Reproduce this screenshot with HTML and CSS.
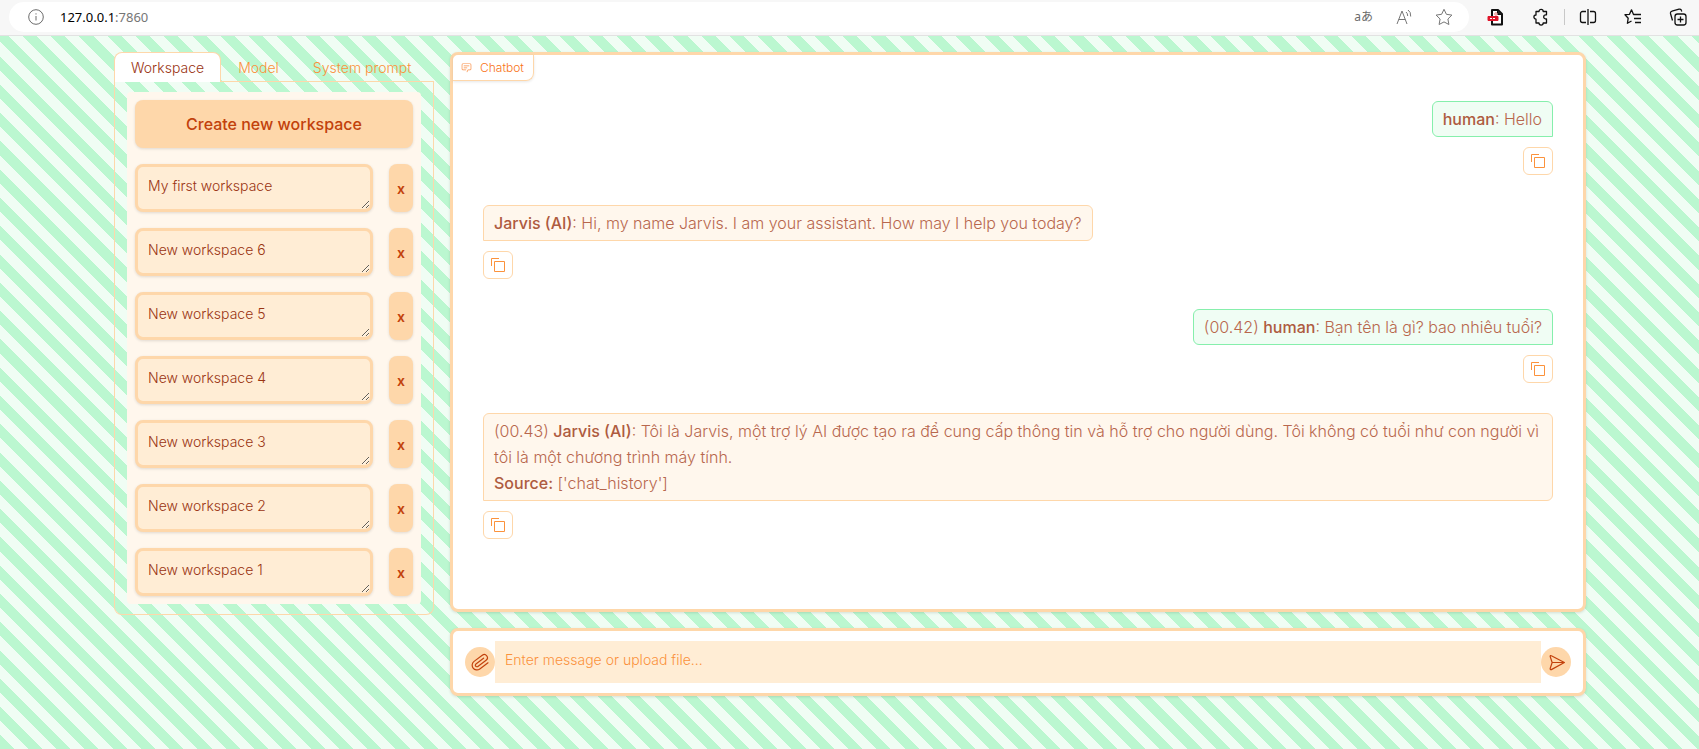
FILE: index.html
```
<!DOCTYPE html>
<html lang="vi">
<head>
<meta charset="utf-8">
<title>Jarvis</title>
<link rel="stylesheet" href="styles.css">
</head>
<body>
<svg class="sprite">
  <symbol id="copy" viewBox="0 0 32 32"><path fill="currentColor" d="M28 10v18H10V10h18m0-2H10a2 2 0 0 0-2 2v18a2 2 0 0 0 2 2h18a2 2 0 0 0 2-2V10a2 2 0 0 0-2-2Z"/><path fill="currentColor" d="M4 18H2V4a2 2 0 0 1 2-2h14v2H4Z"/></symbol>
</svg>
<header class="browser">
  <div class="address">
    <svg class="info" viewBox="0 0 16 16"><circle cx="8" cy="8" r="7.3"/><path d="M8 7v4.5M8 4.3v1.2"/></svg>
    <p class="url">127.0.0.1<span>:7860</span></p>
    <button class="tool translate" aria-label="Translate">aあ</button>
    <button class="tool grey" aria-label="Read aloud"><svg viewBox="0 0 18 18"><path d="M2 16 7 3l5 13M3.700 11.500h6.600M11 4q1.700 1.200 1.700 4M13 2q3 1.700 2.700 6.500"/></svg></button>
    <button class="tool grey" aria-label="Favourite"><svg viewBox="0 0 18 18"><path d="m9 1.300 2.400 5 5.500.8-4 3.900 1 5.500L9 13.900l-4.900 2.600 1-5.500-4-3.900 5.500-.8Z"/></svg></button>
  </div>
  <div class="extensions">
    <button class="tool" aria-label="PDF"><svg viewBox="0 0 18 18"><path d="M5 2h6l4 4v10.500H5Z" stroke-width="2" fill="#fff"/><path d="M10.500 1.500v5H15.500Z" fill="#222"/><circle cx="9" cy="6" r="1.300" stroke="#e88"/><path d="M1 8.500h10v4H1Z" fill="#e0162b" stroke="#e0162b"/><path d="M3 10.500h6" stroke="#fff" stroke-dasharray="2 1"/></svg></button>
    <button class="tool" aria-label="Extensions"><svg viewBox="0 0 18 18"><path stroke-width="1.300" d="M4 3.500h3a2.100 2.100 0 0 1 4.200 0h3.300v3.300h-.7a2.100 2.100 0 0 0 0 4.200h.7v4h-3.300a2.100 2.100 0 0 1-4.200 0H4v-3.800a2.100 2.100 0 0 1 0-4.200Z"/></svg></button>
    <span class="divider"></span>
    <button class="tool" aria-label="Split screen"><svg viewBox="0 0 18 18"><path stroke-width="1.300" d="M7 3.500H3.500a2 2 0 0 0-2 2v7a2 2 0 0 0 2 2H7M11 3.500h3.500a2 2 0 0 1 2 2v7a2 2 0 0 1-2 2H11M9 1v16"/></svg></button>
    <button class="tool" aria-label="Favourites"><svg viewBox="0 0 18 18"><path stroke-width="1.300" d="M12 6.500H9.500L7.500 1.800 5.500 6.300 1 6.700l3.200 3.500-.8 5.100 4.100-2.300M11 6.500h6M10 10.500h7M11 14.500h6"/></svg></button>
    <button class="tool" aria-label="Collections"><svg viewBox="0 0 18 18"><g stroke-width="1.300"><rect x="6" y="6" width="11" height="11" rx="2.500"/><path d="M11.500 8.500v6M8.500 11.500h6M3.500 12.500 1.500 5.500a2 2 0 0 1 1.500-2.400l7-1.900a2 2 0 0 1 2.500 1.500l.3.800"/></g></svg></button>
  </div>
</header>
<main class="app">
  <section class="side">
    <div class="tabs" role="tablist">
      <button class="tab active" role="tab" aria-selected="true">Workspace</button>
      <button class="tab" role="tab">Model</button>
      <button class="tab" role="tab">System prompt</button>
    </div>
    <div class="panel">
      <div class="workspaces">
        <button class="create">Create new workspace</button>
        <div class="row"><textarea class="name" rows="1" aria-label="Workspace name">My first workspace</textarea><button class="remove">x</button></div>
        <div class="row"><textarea class="name" rows="1" aria-label="Workspace name">New workspace 6</textarea><button class="remove">x</button></div>
        <div class="row"><textarea class="name" rows="1" aria-label="Workspace name">New workspace 5</textarea><button class="remove">x</button></div>
        <div class="row"><textarea class="name" rows="1" aria-label="Workspace name">New workspace 4</textarea><button class="remove">x</button></div>
        <div class="row"><textarea class="name" rows="1" aria-label="Workspace name">New workspace 3</textarea><button class="remove">x</button></div>
        <div class="row"><textarea class="name" rows="1" aria-label="Workspace name">New workspace 2</textarea><button class="remove">x</button></div>
        <div class="row"><textarea class="name" rows="1" aria-label="Workspace name">New workspace 1</textarea><button class="remove">x</button></div>
      </div>
    </div>
  </section>
  <section class="chat">
    <div class="card log">
      <h2 class="label"><svg viewBox="0 0 32 32"><path fill="currentColor" d="M17.740 30 16 29l4-7h6a2 2 0 0 0 2-2V8a2 2 0 0 0-2-2H6a2 2 0 0 0-2 2v12a2 2 0 0 0 2 2h9v2H6a4 4 0 0 1-4-4V8a4 4 0 0 1 4-4h20a4 4 0 0 1 4 4v12a4 4 0 0 1-4 4h-4.840Z"/><path fill="currentColor" d="M8 10h16v2H8zm0 6h10v2H8z"/></svg>Chatbot</h2>
      <div class="messages">
        <article class="message user">
          <p class="bubble"><strong>human</strong>: Hello</p>
          <button class="copy" aria-label="Copy"><svg><use href="#copy"/></svg></button>
        </article>
        <article class="message">
          <p class="bubble"><strong>Jarvis (AI)</strong>: Hi, my name Jarvis. I am your assistant. How may I help you today?</p>
          <button class="copy" aria-label="Copy"><svg><use href="#copy"/></svg></button>
        </article>
        <article class="message user">
          <p class="bubble">(00.42) <strong>human</strong>: Bạn tên là gì? bao nhiêu tuổi?</p>
          <button class="copy" aria-label="Copy"><svg><use href="#copy"/></svg></button>
        </article>
        <article class="message">
          <p class="bubble">(00.43) <strong>Jarvis (AI)</strong>: Tôi là Jarvis, một trợ lý AI được tạo ra để cung cấp thông tin và hỗ trợ cho người dùng. Tôi không có tuổi như con người vì tôi là một chương trình máy tính.<br><strong>Source:</strong> ['chat_history']</p>
          <button class="copy" aria-label="Copy"><svg><use href="#copy"/></svg></button>
        </article>
      </div>
    </div>
    <form class="card composer">
      <button class="round" type="button" aria-label="Upload file"><svg viewBox="0 0 24 24"><path d="m21.440 11.050-9.190 9.190a6 6 0 0 1-8.490-8.490l9.190-9.190a4 4 0 0 1 5.660 5.660l-9.200 9.190a2 2 0 0 1-2.830-2.830l8.490-8.480" transform="rotate(8 12 12)"/></svg></button>
      <input class="entry" type="text" aria-label="Message" placeholder="Enter message or upload file...">
      <button class="round" type="button" aria-label="Send"><svg viewBox="0 0 24 24"><path d="M5.500 3.500Q4 2.500 4 4.500L6.500 12 4 19.500q0 2 1.500 1.500L22 12ZM6.500 12H21"/></svg></button>
    </form>
  </section>
</main>
</body>
</html>
```
FILE: styles.css
```
* { box-sizing: border-box; }
body {
  margin: 0;
  min-height: 100vh;
  display: flex;
  flex-direction: column;
  font-family: Inter, "Noto Sans", sans-serif;
  font-size: 16px;
  font-weight: 300;
  color: #9a3412;
  background: repeating-linear-gradient(45deg, #bbf7d0, #bbf7d0 10px, #f0fdf4 10px, #f0fdf4 20px);
}
button, input, textarea { font: inherit; margin: 0; }
button { border: 0; padding: 0; background: none; cursor: pointer; }
p, h2 { margin: 0; }
.sprite { display: none; }

.browser {
  display: flex;
  align-items: flex-start;
  height: 36px;
  padding: 2px 12px 0 9px;
  background: #f7f7f7;
  border-bottom: 1px solid #e2e2e2;
}
.address {
  flex: 1;
  display: flex;
  align-items: center;
  height: 30px;
  padding: 0 16px 0 19px;
  border-radius: 15px;
  background: #fff;
}
.info { width: 16px; height: 16px; margin-right: 16px; fill: none; stroke: #6b6b6b; }
.url { flex: 1; font: 13px "Noto Sans", sans-serif; color: #000; }
.url span { color: #767676; }
.tool { display: flex; width: 18px; height: 18px; color: #111; }
.tool svg { width: 18px; height: 18px; fill: none; stroke: currentColor; stroke-linejoin: round; }
.address .tool + .tool { margin-left: 22px; }
.grey { color: #767676; }
.translate { width: auto; font: 12px/18px "Noto Sans", "Noto Sans CJK JP", sans-serif; color: #6b6b6b; }
.extensions { display: flex; align-items: center; height: 30px; padding-left: 18px; gap: 27px; }
.divider { width: 1px; height: 16px; margin: 0 -13px; background: #c8c8c8; }

.app {
  flex: 1;
  display: flex;
  align-items: flex-start;
  gap: 16px;
  padding: 16px 113px 16px 114px;
}
.side { width: 320px; }
.tabs { display: flex; border-bottom: 1px solid #fed7aa; }
.tab {
  height: 30px;
  padding: 0 16px;
  margin-bottom: -1px;
  border: 1px solid transparent;
  border-bottom: 0;
  border-radius: 8px 8px 0 0;
  font-size: 14px;
  color: #fb923c;
}
.tab.active { background: #fff; border-color: #fed7aa; color: #9a3412; }
.panel {
  padding: 10px 12px;
  border: 1px solid #fed7aa;
  border-top: 0;
  border-radius: 0 0 8px 8px;
}
.workspaces {
  display: flex;
  flex-direction: column;
  gap: 16px;
  padding: 8px;
  border-radius: 4px;
  background: #fff7ed;
}
.create, .remove, .name {
  height: 48px;
  border-radius: 8px;
  box-shadow: 0 1px 3px rgba(0, 0, 0, .12);
}
.create, .remove { background: #fed7aa; color: #c2410c; font-weight: 500; }
.row { display: flex; gap: 16px; }
.name {
  flex: 1;
  min-width: 0;
  padding: 8px 10px;
  border: 3px solid #fed7aa;
  background: #ffedd5;
  color: #9a3412;
  font-size: 14px;
  line-height: 21px;
  resize: vertical;
  overflow: hidden;
}
.remove { width: 24px; font-size: 14px; font-weight: 600; }

.chat { flex: 1; min-width: 0; display: flex; flex-direction: column; gap: 16px; }
.card {
  border: 3px solid #fed7aa;
  border-radius: 8px;
  background: #fff;
  box-shadow: 0 1px 3px rgba(0, 0, 0, .12);
}
.label {
  display: inline-flex;
  align-items: center;
  gap: 8px;
  height: 26px;
  padding: 0 9px 0 8px;
  border: 1px solid #fed7aa;
  border-width: 0 1px 1px 0;
  border-radius: 0 0 8px 0;
  box-shadow: 0 1px 3px rgba(0, 0, 0, .1);
  font-size: 12px;
  font-weight: 300;
  color: #f97316;
}
.label svg { width: 11px; height: 11px; opacity: .8; }
.log { min-height: 560px; display: flex; flex-direction: column; align-items: flex-start; }
.messages { align-self: stretch; display: flex; flex-direction: column; gap: 30px; padding: 20px 30px; }
.message { display: flex; flex-direction: column; align-items: flex-start; gap: 10px; }
.bubble {
  padding: 4px 10px;
  border: 1px solid #fed7aa;
  border-radius: 6px 6px 6px 0;
  background: #fff7ed;
  line-height: 26px;
  color: #b8674d;
}
.bubble strong { font-weight: 500; color: #ae5b40; }
.user { align-items: flex-end; }
.user .bubble { border-color: #86efac; border-radius: 6px 6px 0 6px; background: #f0fdf4; }
.copy {
  display: flex;
  align-items: center;
  justify-content: center;
  width: 30px;
  height: 28px;
  border: 1px solid #fed7aa;
  border-radius: 6px;
  color: #fb923c;
}
.copy svg { width: 16px; height: 16px; }

.composer { display: flex; align-items: center; padding: 10px 12px; }
.round {
  display: flex;
  align-items: center;
  justify-content: center;
  width: 30px;
  height: 30px;
  border-radius: 50%;
  background: #fed7aa;
  color: #c2410c;
}
.round svg { width: 19px; height: 19px; fill: none; stroke: currentColor; stroke-width: 1.500; stroke-linejoin: round; stroke-linecap: round; }
.entry {
  flex: 1;
  min-width: 0;
  height: 42px;
  padding: 0 10px 5px;
  border: 0;
  background: #ffedd5;
  color: #9a3412;
  font-size: 14px;
}
.entry::placeholder { color: #fb923c; opacity: 1; }
```
